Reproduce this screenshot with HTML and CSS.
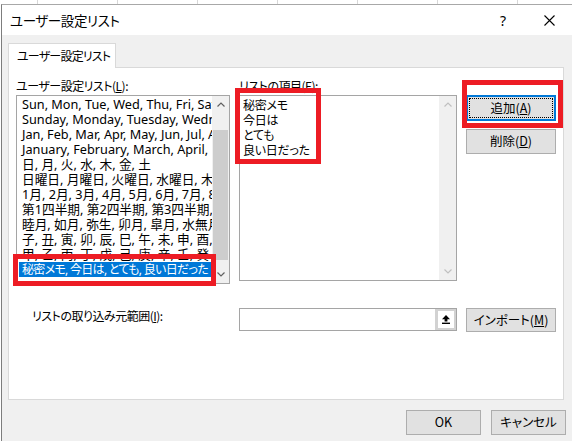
FILE: index.html
```html
<!DOCTYPE html>
<html lang="ja">
<head>
<meta charset="utf-8">
<title>ユーザー設定リスト</title>
<link rel="stylesheet" href="styles.css">
</head>
<body>
<div class="dialog">
  <div class="titlebar">
    <span class="title">ユーザー設定リスト</span>
    <span class="tb-btn help">?</span>
    <span class="tb-btn close"><svg width="11" height="11" viewBox="0 0 11 11"><path d="M0.5 0.5L10.5 10.5M10.5 0.5L0.5 10.5" stroke="#000" stroke-width="1.1" fill="none"/></svg></span>
  </div>
  <div class="body">
    <div class="tab">ユーザー設定リスト</div>
    <div class="panel">
      <div class="lbl">ユーザー設定リスト(<u>L</u>):</div>
      <div class="lbl">リストの項目(<u>E</u>):</div>
      <div></div>

      <div class="listbox lb-left">
        <div class="items">
          <div class="item">Sun, Mon, Tue, Wed, Thu, Fri, Sat</div>
          <div class="item">Sunday, Monday, Tuesday, Wednesday, Thursday, Friday, Saturday</div>
          <div class="item">Jan, Feb, Mar, Apr, May, Jun, Jul, Aug, Sep, Oct, Nov, Dec</div>
          <div class="item">January, February, March, April, May, June, July</div>
          <div class="item">日, 月, 火, 水, 木, 金, 土</div>
          <div class="item">日曜日, 月曜日, 火曜日, 水曜日, 木曜日, 金曜日, 土曜日</div>
          <div class="item">1月, 2月, 3月, 4月, 5月, 6月, 7月, 8月, 9月</div>
          <div class="item">第1四半期, 第2四半期, 第3四半期, 第4四半期</div>
          <div class="item">睦月, 如月, 弥生, 卯月, 皐月, 水無月, 文月</div>
          <div class="item">子, 丑, 寅, 卯, 辰, 巳, 午, 未, 申, 酉, 戌, 亥</div>
          <div class="item">甲, 乙, 丙, 丁, 戊, 己, 庚, 辛, 壬, 癸</div>
          <div class="item selected">秘密メモ, 今日は, とても, 良い日だった</div>
        </div>
        <div class="scrollbar">
          <div class="arrow"><svg width="8" height="5" viewBox="0 0 8 5"><path d="M0.5 4.5L4 1L7.5 4.5" stroke="#606060" stroke-width="1.2" fill="none"/></svg></div>
          <div class="track"><div class="thumb"></div></div>
          <div class="arrow"><svg width="8" height="5" viewBox="0 0 8 5"><path d="M0.5 0.5L4 4L7.5 0.5" stroke="#606060" stroke-width="1.2" fill="none"/></svg></div>
        </div>
      </div>

      <div class="listbox lb-right">
        <div class="items">
          <div class="item">秘密メモ</div>
          <div class="item">今日は</div>
          <div class="item">とても</div>
          <div class="item">良い日だった</div>
        </div>
        <div class="scrollbar">
          <div class="arrow"><svg width="8" height="5" viewBox="0 0 8 5"><path d="M0.5 4.5L4 1L7.5 4.5" stroke="#c0c0c0" stroke-width="1.2" fill="none"/></svg></div>
          <div class="track"></div>
          <div class="arrow"><svg width="8" height="5" viewBox="0 0 8 5"><path d="M0.5 0.5L4 4L7.5 0.5" stroke="#c0c0c0" stroke-width="1.2" fill="none"/></svg></div>
        </div>
      </div>

      <div class="btns">
        <button class="btn btn-side focus">追加(<u>A</u>)</button>
        <button class="btn btn-side">削除(<u>D</u>)</button>
      </div>

      <div class="lbl import-lbl">リストの取り込み元範囲(<u>I</u>):</div>
      <div class="refedit">
        <span class="ref-btn"><svg width="8" height="9" viewBox="0 0 8 9"><path d="M4 0L8 4.2H5.4V6.6H2.6V4.2H0Z" fill="#000"/><rect x="0" y="7.6" width="8" height="1.4" fill="#000"/></svg></span>
      </div>
      <button class="btn btn-import">インポート(<u>M</u>)</button>
    </div>
    <div class="footer">
      <button class="btn btn-foot">OK</button>
      <button class="btn btn-foot">キャンセル</button>
    </div>
  </div>
</div>
<div class="mark mark-sel"></div>
<div class="mark mark-items"></div>
<div class="mark mark-add"></div>
</body>
</html>
```

FILE: styles.css
```css
* { box-sizing: border-box; }

html, body {
  margin: 0;
  padding: 0;
  width: 572px;
  height: 441px;
  overflow: hidden;
}

body {
  position: relative;
  background-color: #ffffff;
  background-image: linear-gradient(to right, #d8d8d8 1px, transparent 1px);
  background-size: 80px 100%;
  background-position: 37px 0;
  font-family: "Noto Sans CJK JP", sans-serif;
  font-feature-settings: "palt";
  font-size: 12px;
  color: #000;
}

.dialog {
  position: absolute;
  left: 1px;
  top: 4px;
  width: 571px;
  height: 437px;
  border-left: 1px solid #7d7d7d;
  border-top: 1px solid #a8a8a8;
  background: #f0f0f0;
  display: flex;
  flex-direction: column;
}

.titlebar {
  height: 30px;
  background: #fff;
  display: flex;
  align-items: center;
  flex-shrink: 0;
}

.title {
  padding-left: 8px;
  font-size: 13.5px;
  letter-spacing: -0.4px;
  line-height: 30px;
  flex: 1;
}

.tb-btn {
  width: 46px;
  height: 30px;
  display: flex;
  align-items: center;
  justify-content: center;
}

.help {
  font-family: "Noto Sans", sans-serif;
  font-size: 14px;
  padding-top: 1px;
}

.body {
  padding: 8px 0 0 6px;
  display: flex;
  flex-direction: column;
}

.tab {
  width: 108px;
  height: 25px;
  margin-bottom: -1px;
  background: #fff;
  border: 1px solid #d9d9d9;
  border-bottom: 0;
  padding-left: 8px;
  line-height: 23px;
  white-space: nowrap;
  letter-spacing: -0.8px;
  position: relative;
  z-index: 1;
}

.panel {
  width: 556px;
  height: 333px;
  background: #fff;
  border: 1px solid #d9d9d9;
  padding: 10px 0 0 7px;
  display: grid;
  grid-template-columns: 214px 218px 90px;
  grid-template-rows: 17px 189px auto;
  column-gap: 9px;
  align-items: start;
}

.lbl {
  line-height: 15px;
  white-space: nowrap;
  letter-spacing: -0.5px;
}

u { text-underline-offset: 1px; }

.listbox {
  border: 1px solid #a5a5a5;
  background: #fff;
  display: flex;
  overflow: hidden;
}

.lb-left { height: 189px; }
.lb-right { height: 186px; }

.items {
  flex: 1;
  min-width: 0;
  padding: 1px 0 0 2px;
  overflow: hidden;
}

.lb-left .items {
  font-family: "Noto Sans", "Noto Sans CJK JP", sans-serif;
  font-size: 12.7px;
}

.lb-right .items { padding-left: 0; }

.item {
  height: 15px;
  line-height: 15px;
  padding-left: 3px;
  white-space: nowrap;
  overflow: hidden;
}

.lb-right .item {
  padding-left: 3px;
  letter-spacing: -0.3px;
}

.item.selected {
  background: #0078d7;
  color: #fff;
  font-size: 12px;
  letter-spacing: -0.7px;
}

.scrollbar {
  width: 17px;
  flex-shrink: 0;
  background: #f0f0f0;
  display: flex;
  flex-direction: column;
}

.arrow {
  height: 17px;
  display: flex;
  align-items: center;
  justify-content: center;
  flex-shrink: 0;
}

.track {
  flex: 1;
  padding-top: 17px;
}

.thumb {
  height: 130px;
  margin: 0 1px;
  background: #cdcdcd;
}

.btns {
  display: flex;
  flex-direction: column;
  gap: 8px;
}

.btn {
  font-family: "Noto Sans CJK JP", sans-serif;
  font-feature-settings: "palt";
  font-size: 12.5px;
  color: #000;
  background: #e1e1e1;
  border: 1px solid #adadad;
  padding: 0;
  margin: 0;
  line-height: 1;
}

.btn-side {
  width: 90px;
  height: 25px;
}

.btn-side.focus {
  height: 26px;
  border: 2px solid #0078d7;
  outline: 1px dotted #000;
  outline-offset: -4px;
}

.import-lbl {
  margin-top: 24px;
  padding-left: 16px;
}

.refedit {
  margin-top: 24px;
  height: 23px;
  border: 1px solid #a5a5a5;
  background: #fff;
  display: flex;
  justify-content: flex-end;
}

.ref-btn {
  width: 21px;
  height: 21px;
  border: 2px solid #d2d2d2;
  border-left-width: 3px;
  background: #fff;
  display: flex;
  align-items: center;
  justify-content: center;
}

.btn-import {
  margin-top: 24px;
  width: 90px;
  height: 24px;
}

.footer {
  margin-top: 10px;
  padding-right: 6px;
  display: flex;
  justify-content: flex-end;
  gap: 10px;
}

.btn-foot {
  width: 75px;
  height: 25px;
}

.mark {
  position: absolute;
  border: 5px solid #ed1c24;
  z-index: 5;
}

.mark-sel {
  left: 13px;
  top: 254px;
  width: 203px;
  height: 32px;
}

.mark-items {
  left: 235px;
  top: 88px;
  width: 86px;
  height: 76px;
}

.mark-add {
  left: 462px;
  top: 80px;
  width: 101px;
  height: 48px;
}
```
